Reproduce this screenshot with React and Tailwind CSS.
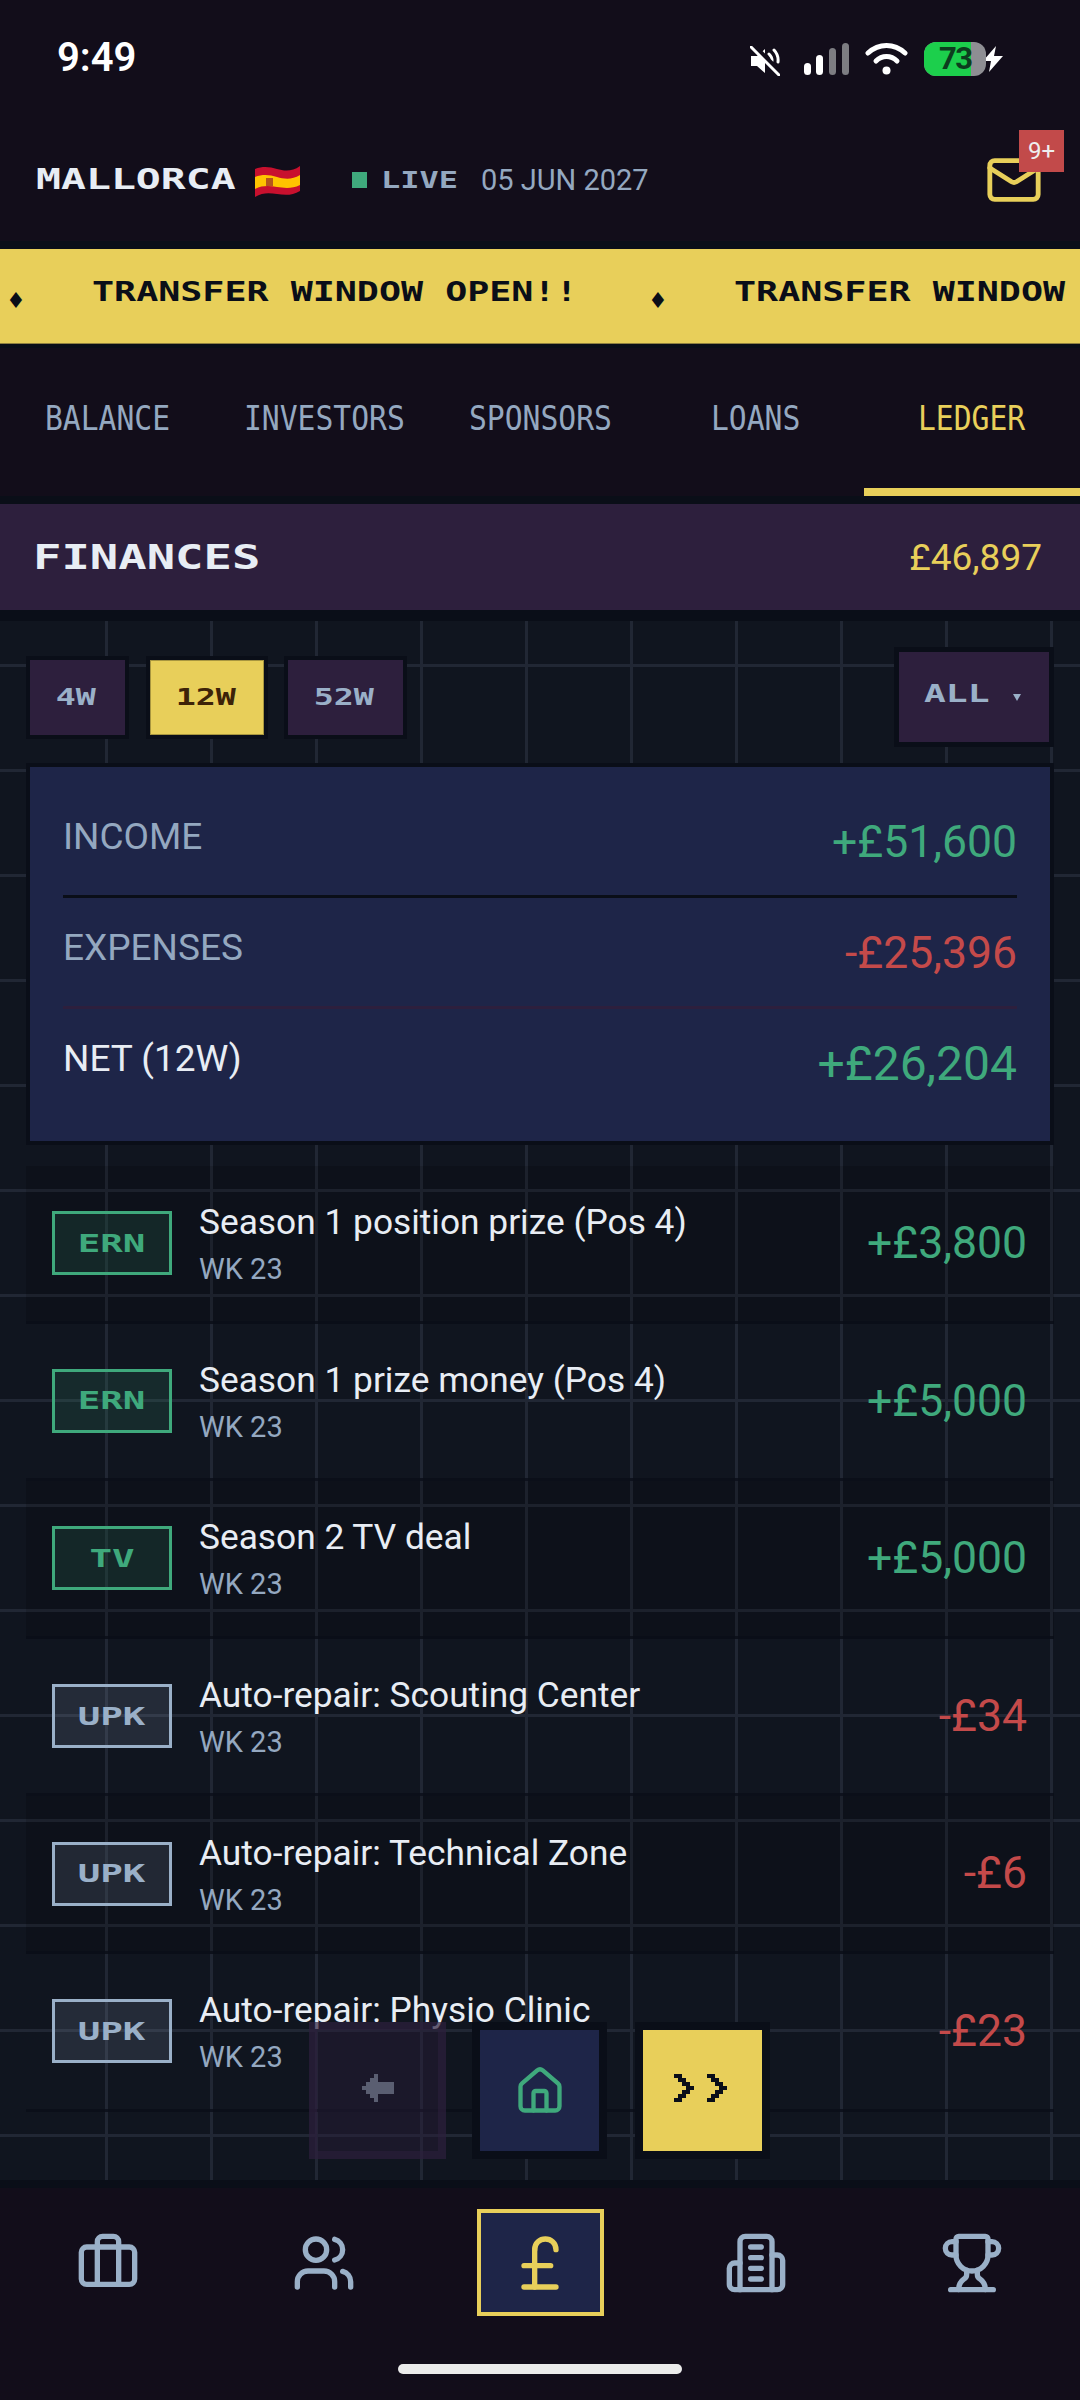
import React from "react";
import { Briefcase, Users, PoundSterling, Trophy, House, Mail } from "lucide-react";

const rows = [
  { tag: "ERN", title: "Season 1 position prize (Pos 4)", value: "+£3,800", kind: "green", dark: true },
  { tag: "ERN", title: "Season 1 prize money (Pos 4)", value: "+£5,000", kind: "green" },
  { tag: "TV", title: "Season 2 TV deal", value: "+£5,000", kind: "green", dark: true },
  { tag: "UPK", title: "Auto-repair: Scouting Center", value: "-£34", kind: "grey" },
  { tag: "UPK", title: "Auto-repair: Technical Zone", value: "-£6", kind: "grey", dark: true },
  { tag: "UPK", title: "Auto-repair: Physio Clinic", value: "-£23", kind: "grey" },
];

const tabs = ["BALANCE", "INVESTORS", "SPONSORS", "LOANS", "LEDGER"];

const Pixel = ({ className, children }) => (
  <span className={`block whitespace-nowrap font-['DejaVu_Sans_Mono',monospace] font-bold ${className}`}>
    {children}
  </span>
);

const MuteIcon = () => (
  <svg width="30" height="30" viewBox="0 0 30 30" className="mt-[3px]">
    <path d="M1 10h6l8-7v24l-8-7H1z" fill="#fff" />
    <path d="M19 8a9 9 0 0 1 3 7M24 4a15 15 0 0 1 4 12" stroke="#fff" strokeWidth="3" fill="none" strokeLinecap="round" />
    <path d="M3 -1L31 27" stroke="#120d1a" strokeWidth="5" />
    <path d="M1 1L29 29" stroke="#fff" strokeWidth="3" strokeLinecap="round" />
  </svg>
);

const SignalIcon = () => (
  <svg width="45" height="32" viewBox="0 0 45 32">
    <rect x="0" y="20" width="7" height="12" rx="3.5" fill="#fff" />
    <rect x="12" y="12" width="7" height="20" rx="3.5" fill="#fff" />
    <rect x="25" y="5" width="7" height="27" rx="3.5" fill="#7d7d82" />
    <rect x="38" y="0" width="7" height="32" rx="3.5" fill="#7d7d82" />
  </svg>
);

const WifiIcon = () => (
  <svg width="43" height="32" viewBox="0 0 43 32" fill="none" stroke="#fff" strokeWidth="5" strokeLinecap="round">
    <path d="M3 10C14 0 29 0 40 10" />
    <path d="M11 18C17 12 26 12 32 18" />
    <circle cx="21.5" cy="27.5" r="4" fill="#fff" stroke="none" />
  </svg>
);

const Battery = () => (
  <div className="relative w-[62px] h-[34px] rounded-[12px] overflow-hidden bg-[#8e8e93] flex">
    <div className="w-[47px] h-full bg-[#1ccf4c] pl-[15px] font-['Roboto',sans-serif] font-bold text-[31px] tracking-[-1.5px] whitespace-nowrap leading-[34px] text-[#0d3d1e]">
      73
    </div>
  </div>
);

const Bolt = () => (
  <svg width="24" height="28" viewBox="0 0 24 28" className="-ml-[5px]">
    <path d="M15 1L2 16h8l-2 11L22 11h-9z" fill="#fff" stroke="#120d1a" strokeWidth="2" paintOrder="stroke" />
  </svg>
);

const Flag = () => (
  <svg width="45" height="31" viewBox="0 0 45 31" className="shrink-0 mt-[3px]">
    <path d="M0 3C8 0 15 1 22 3S37 6 45 0V25C37 30 29 29 22 28S8 26 0 31Z" fill="#c8102e" />
    <path d="M0 11C8 8 15 9 22 11S37 14 45 9V19C37 23 29 22 22 21S8 19 0 23Z" fill="#ffc400" />
    <rect x="11" y="12" width="7" height="8" fill="#b5561c" />
  </svg>
);

const BuildingIcon = () => (
  <svg width="64" height="64" viewBox="0 0 24 24" fill="none" stroke="#9ab0c8" strokeWidth="2" strokeLinecap="round" strokeLinejoin="round">
    <path d="M6 22V4a2 2 0 0 1 2-2h8a2 2 0 0 1 2 2v18Z" />
    <path d="M6 12H4a2 2 0 0 0-2 2v6a2 2 0 0 0 2 2h2" />
    <path d="M18 9h2a2 2 0 0 1 2 2v9a2 2 0 0 1-2 2h-2" />
    <path d="M10 6h4M10 10h4M10 14h4M10 18h4" />
  </svg>
);

const BackArrow = () => (
  <svg width="32" height="28" viewBox="0 0 32 28" fill="#9aa3b8">
    <rect x="0" y="12" width="4" height="4" />
    <rect x="4" y="8" width="4" height="12" />
    <rect x="8" y="4" width="4" height="20" />
    <rect x="12" y="0" width="4" height="28" />
    <rect x="16" y="8" width="16" height="12" />
  </svg>
);

const Chevron = () => (
  <svg width="20" height="28" viewBox="0 0 20 28" fill="#0a0e18">
    <rect x="0" y="0" width="8" height="4" />
    <rect x="4" y="4" width="8" height="4" />
    <rect x="8" y="8" width="8" height="4" />
    <rect x="12" y="12" width="8" height="4" />
    <rect x="8" y="16" width="8" height="4" />
    <rect x="4" y="20" width="8" height="4" />
    <rect x="0" y="24" width="8" height="4" />
  </svg>
);

const TickerItem = () => (
  <div className="w-[642px] shrink-0 flex items-center">
    <span className="w-[92px] shrink-0 pl-[6px] pt-[10px] text-[22px] leading-none font-['DejaVu_Sans',sans-serif] text-[#0a0e18]">
      ♦
    </span>
    <Pixel className="w-[550px] text-[26px] leading-none text-[#0a0e18] origin-left scale-x-[1.41] -mt-[9px]">
      TRANSFER WINDOW OPEN!!
    </Pixel>
  </div>
);

const SummaryRow = ({ label, value, labelColor, valueClass, rowClass }) => (
  <div className={`flex justify-between items-start pt-[21px] ${rowClass}`}>
    <span className={`text-[37px] leading-[54px] mt-[2px] ${labelColor}`}>{label}</span>
    <span className={valueClass}>{value}</span>
  </div>
);

const LedgerRow = ({ tag, title, value, kind, dark }) => (
  <div className={`h-[157.6px] flex items-center pl-[26px] pr-[27px] border-b-[3px] border-[#0a0e18]/80 ${dark ? "bg-black/15" : ""}`}>
    <div
      className={`w-[120px] h-[64px] shrink-0 flex items-center justify-center border-[3px] ${
        kind === "green"
          ? "border-[#3fa97c] bg-[#3fa97c]/15 text-[#3fa97c]"
          : "border-[#9ab0c8] bg-[#9ab0c8]/15 text-[#9ab0c8]"
      }`}
    >
      <Pixel className="text-[25px] leading-none scale-x-[1.5]">{tag}</Pixel>
    </div>
    <div className="ml-[27px] flex-1 pt-[1px]">
      <div className="text-[35.3px] leading-[51px] text-[#e8edf4]">{title}</div>
      <div className="text-[29px] leading-[42px] text-[#94a8c0]">WK 23</div>
    </div>
    <span className={`text-[44.5px] leading-none ${kind === "green" ? "text-[#3fa97c]" : "text-[#c44a4a]"}`}>{value}</span>
  </div>
);

export default function App() {
  return (
    <div className="relative w-[1080px] h-[2400px] overflow-hidden flex flex-col bg-[#10151f] font-['Roboto',sans-serif]">
      <header className="h-[249px] shrink-0 bg-[#120d1a] border-b-[8px] border-[#0a0e18]">
        <div className="h-[114px] flex items-center justify-between pl-[57px] pr-[75px]">
          <span className="text-[40px] font-semibold text-white leading-none mt-[2px]">9:49</span>
          <div className="flex items-center mt-[4px]">
            <MuteIcon />
            <div className="ml-[24px]"><SignalIcon /></div>
            <div className="ml-[16px]"><WifiIcon /></div>
            <div className="ml-[16px]"><Battery /></div>
            <Bolt />
          </div>
        </div>
        <div className="relative h-[127px] flex items-center pl-[36px] pt-[4px]">
          <div className="w-[219px] shrink-0">
            <Pixel className="text-[29px] leading-none text-[#e8edf4] origin-left scale-x-[1.43]">MALLORCA</Pixel>
          </div>
          <Flag />
          <div className="w-[15px] h-[16px] ml-[52px] shrink-0 bg-[#3fa97c]" />
          <div className="w-[100px] ml-[14px] shrink-0">
            <Pixel className="text-[23px] leading-none text-[#94a8c0] origin-left scale-x-[1.39] mt-[1px]">LIVE</Pixel>
          </div>
          <span className="text-[29px] leading-none text-[#94a8c0] mt-[1px]">05 JUN 2027</span>
          <div className="absolute left-[985px] top-[37px]">
            <Mail size={58} strokeWidth={2} className="text-[#e8cf5a]" />
          </div>
          <div className="absolute left-[1019px] top-[16px] w-[45px] h-[42px] bg-[#c24a4a] flex items-center justify-center text-[24px] text-[#eee]">
            9+
          </div>
        </div>
      </header>

      <div className="h-[95px] shrink-0 bg-[#e8cf5a] flex items-center overflow-hidden border-b border-[#8f8040]">
        <TickerItem />
        <TickerItem />
      </div>

      <div className="h-[152px] shrink-0 bg-[#120d1a] border-t-[4px] border-[#0a0e18] grid grid-cols-5">
        {tabs.map((tab) => (
          <div
            key={tab}
            className={`h-full flex items-center justify-center border-b-[8px] ${
              tab === "LEDGER" ? "border-[#e8cf5a] text-[#e8cf5a]" : "border-transparent text-[#94a8c0]"
            }`}
          >
            <span className="block font-['DejaVu_Sans_Mono',monospace] text-[33px] leading-none scale-x-[0.9] mt-[1px]">
              {tab}
            </span>
          </div>
        ))}
      </div>

      <div className="h-[125px] shrink-0 bg-[#2d1f3d] border-t-[8px] border-b-[11px] border-[#0a0e18] flex items-center justify-between pl-[33px] pr-[38px]">
        <Pixel className="text-[33px] leading-none text-[#e8edf4] origin-left scale-x-[1.43]">FINANCES</Pixel>
        <span className="text-[37px] leading-none text-[#e8cf5a]">£46,897</span>
      </div>

      <main className="relative flex-1 overflow-hidden">
        <div className="absolute inset-0 bg-[linear-gradient(#212734_3px,transparent_3px)] bg-[size:100%_105px] bg-[position:0_43px]" />
        <div className="absolute inset-0 left-[105px] bg-[linear-gradient(90deg,#212734_3px,transparent_3px)] bg-[size:105px_100%]" />

        <div className="relative">
          <div className="flex justify-between items-start pt-[26px] px-[26px]">
            <div className="flex mt-[9px]">
              <div className="w-[103px] h-[83px] pr-[3px] border-[4px] border-[#0a0e18] bg-[#2d1f3d] flex items-center justify-center text-[#9ab0c8]">
                <Pixel className="text-[23px] leading-none scale-x-[1.45]">4W</Pixel>
              </div>
              <div className="w-[122px] h-[83px] pr-[2px] ml-[17px] border-[4px] border-[#0a0e18] bg-[#e8cf5a] shadow-[inset_0_0_0_1px_#a8963f] flex items-center justify-center text-[#3d2308]">
                <Pixel className="text-[23px] leading-none scale-x-[1.45]">12W</Pixel>
              </div>
              <div className="w-[123px] h-[83px] pr-[3px] ml-[16px] border-[4px] border-[#0a0e18] bg-[#2d1f3d] flex items-center justify-center text-[#9ab0c8]">
                <Pixel className="text-[23px] leading-none scale-x-[1.45]">52W</Pixel>
              </div>
            </div>
            <div className="w-[160px] h-[100px] border-[5px] border-[#0a0e18] bg-[#2d1f3d] relative text-[#9ab0c8]">
              <Pixel className="absolute left-[25px] top-[29px] text-[25px] leading-none origin-left scale-x-[1.45]">ALL</Pixel>
              <span className="absolute left-[114px] top-[42px] w-0 h-0 border-x-[4px] border-t-[7px] border-x-transparent border-t-[#9ab0c8]" />
            </div>
          </div>

          <div className="mx-[26px] mt-[16px] border-[4px] border-[#0a0e18] bg-[#1e2548] pl-[33px] pr-[33px] pt-[20px] pb-[18px]">
            <SummaryRow
              label="INCOME"
              labelColor="text-[#94a8c0]"
              value="+£51,600"
              valueClass="text-[44.5px] leading-[66px] mt-[1px] text-[#3fa97c]"
              rowClass="pb-[20px] border-b-[3px] border-[#0a0e18]"
            />
            <SummaryRow
              label="EXPENSES"
              labelColor="text-[#94a8c0]"
              value="-£25,396"
              valueClass="text-[44.5px] leading-[66px] mt-[1px] text-[#c44a4a]"
              rowClass="pb-[20px] border-b-[3px] border-[#2d1f3d]"
            />
            <SummaryRow
              label="NET (12W)"
              labelColor="text-[#e8edf4]"
              value="+£26,204"
              valueClass="text-[48px] leading-[72px] -mt-[2px] text-[#3fa97c]"
              rowClass="pb-[23px]"
            />
          </div>

          <div className="mx-[26px] mt-[21px]">
            {rows.map((row) => (
              <LedgerRow key={row.title} {...row} />
            ))}
          </div>
        </div>
      </main>

      <nav className="h-[220px] shrink-0 bg-[#120d1a] border-t-[8px] border-[#0a0e18] pt-[21px]">
        <div className="grid grid-cols-5 h-[107px]">
          <div className="flex items-center justify-center"><Briefcase size={64} strokeWidth={2} className="text-[#9ab0c8]" /></div>
          <div className="flex items-center justify-center"><Users size={64} strokeWidth={2} className="text-[#9ab0c8]" /></div>
          <div className="flex items-center justify-center">
            <div className="w-[127px] h-[107px] border-[4px] border-[#e8cf5a] bg-[#1e2548] flex items-center justify-center">
              <PoundSterling size={64} strokeWidth={2} className="text-[#e8cf5a]" />
            </div>
          </div>
          <div className="flex items-center justify-center"><BuildingIcon /></div>
          <div className="flex items-center justify-center"><Trophy size={64} strokeWidth={2} className="text-[#9ab0c8]" /></div>
        </div>
        <div className="mx-auto mt-[48px] w-[284px] h-[10px] rounded-full bg-[#ebebeb]" />
      </nav>

      <div className="absolute left-[309px] top-[2022px] flex">
        <div className="w-[137px] h-[137px] pb-[5px] border-[8px] border-[#2d1f3d]/50 bg-[#2d1f3d]/40 flex items-center justify-center">
          <div className="opacity-50"><BackArrow /></div>
        </div>
        <div className="w-[135px] h-[137px] ml-[26px] border-[8px] border-[#0a0e18] bg-[#1e2548] flex items-center justify-center">
          <House size={52} strokeWidth={2} className="text-[#3fa97c]" />
        </div>
        <div className="w-[135px] h-[137px] ml-[28px] pb-[5px] pr-[4px] border-[8px] border-[#0a0e18] bg-[#e8cf5a] flex items-center justify-center gap-[13px]">
          <Chevron />
          <Chevron />
        </div>
      </div>
    </div>
  );
}
